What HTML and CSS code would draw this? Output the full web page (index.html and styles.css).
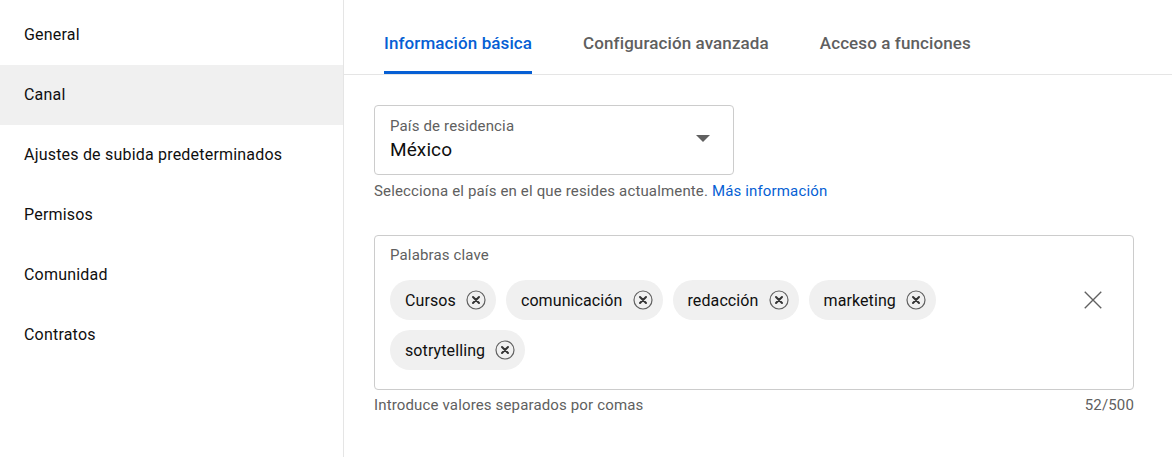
FILE: index.html
```html
<!DOCTYPE html>
<html lang="es">
<head>
<meta charset="utf-8">
<title>Canal</title>
<link rel="stylesheet" href="styles.css">
</head>
<body>
<div class="page">
  <nav class="sidebar">
    <div class="nav-item">General</div>
    <div class="nav-item active">Canal</div>
    <div class="nav-item">Ajustes de subida predeterminados</div>
    <div class="nav-item">Permisos</div>
    <div class="nav-item">Comunidad</div>
    <div class="nav-item">Contratos</div>
  </nav>
  <main class="main">
    <div class="tabs">
      <div class="tab active">Información básica</div>
      <div class="tab">Configuración avanzada</div>
      <div class="tab">Acceso a funciones</div>
    </div>
    <div class="content">
      <div class="select">
        <div class="select-text">
          <div class="field-label">País de residencia</div>
          <div class="select-value">México</div>
        </div>
        <svg class="arrow" width="24" height="24" viewBox="0 0 24 24"><path d="M5 9h14l-7 7z" fill="#606060"/></svg>
      </div>
      <p class="helper">Selecciona el país en el que resides actualmente. <a class="link">Más información</a></p>

      <div class="keywords">
        <div class="field-label">Palabras clave</div>
        <div class="kw-body">
          <div class="chips">
            <span class="chip">Cursos <svg class="chip-x" width="20" height="20" viewBox="0 0 20 20"><circle cx="10" cy="10" r="9" fill="none" stroke="#606060" stroke-width="1.2"/><path d="M7 7l6 6M13 7l-6 6" stroke="#333" stroke-width="2" stroke-linecap="round"/></svg></span>
            <span class="chip">comunicación <svg class="chip-x" width="20" height="20" viewBox="0 0 20 20"><circle cx="10" cy="10" r="9" fill="none" stroke="#606060" stroke-width="1.2"/><path d="M7 7l6 6M13 7l-6 6" stroke="#333" stroke-width="2" stroke-linecap="round"/></svg></span>
            <span class="chip">redacción <svg class="chip-x" width="20" height="20" viewBox="0 0 20 20"><circle cx="10" cy="10" r="9" fill="none" stroke="#606060" stroke-width="1.2"/><path d="M7 7l6 6M13 7l-6 6" stroke="#333" stroke-width="2" stroke-linecap="round"/></svg></span>
            <span class="chip">marketing <svg class="chip-x" width="20" height="20" viewBox="0 0 20 20"><circle cx="10" cy="10" r="9" fill="none" stroke="#606060" stroke-width="1.2"/><path d="M7 7l6 6M13 7l-6 6" stroke="#333" stroke-width="2" stroke-linecap="round"/></svg></span>
            <span class="chip">sotrytelling <svg class="chip-x" width="20" height="20" viewBox="0 0 20 20"><circle cx="10" cy="10" r="9" fill="none" stroke="#606060" stroke-width="1.2"/><path d="M7 7l6 6M13 7l-6 6" stroke="#333" stroke-width="2" stroke-linecap="round"/></svg></span>
          </div>
          <div class="clear">
            <svg width="24" height="24" viewBox="0 0 24 24"><path d="M3 3l18 18M21 3L3 21" stroke="#606060" stroke-width="1.5"/></svg>
          </div>
        </div>
      </div>
      <div class="kw-footer">
        <span>Introduce valores separados por comas</span>
        <span>52/500</span>
      </div>
    </div>
  </main>
</div>
</body>
</html>
```

FILE: styles.css
```css
* { box-sizing: border-box; }
html, body {
  margin: 0;
  padding: 0;
  background: #fff;
  font-family: Roboto, "Noto Sans", Arial, sans-serif;
  color: #0f0f0f;
}
.page {
  display: flex;
  width: 1172px;
  height: 457px;
  overflow: hidden;
}
.sidebar {
  width: 344px;
  flex: 0 0 344px;
  border-right: 1px solid #e5e5e5;
  padding-top: 5px;
}
.nav-item {
  height: 60px;
  display: flex;
  align-items: center;
  padding: 0 0 2px 24px;
  font-size: 16px;
  letter-spacing: 0.2px;
  color: #0f0f0f;
}
.nav-item.active {
  background: #f0f0f0;
}
.main {
  flex: 1;
  display: flex;
  flex-direction: column;
}
.tabs {
  display: flex;
  gap: 51px;
  padding-left: 40px;
  height: 75px;
  border-bottom: 1px solid #e5e5e5;
}
.tab {
  padding-top: 33px;
  line-height: 20px;
  font-size: 17px;
  letter-spacing: 0.1px;
  font-weight: 500;
  color: #5f5f5f;
  height: 74px;
  border-bottom: 3px solid transparent;
}
.tab.active {
  color: #065fd4;
  border-bottom-color: #065fd4;
}
.content {
  padding: 30px 0 0 30px;
}
.select {
  width: 360px;
  height: 70px;
  border: 1px solid #cccccc;
  border-radius: 4px;
  display: flex;
  align-items: center;
  justify-content: space-between;
  padding: 0 18px 0 15px;
}
.select-text {
  display: flex;
  flex-direction: column;
  gap: 3px;
}
.field-label {
  font-size: 15px;
  letter-spacing: 0.15px;
  line-height: 17px;
  color: #606060;
}
.select-value {
  font-size: 19px;
  letter-spacing: 0.1px;
  line-height: 24px;
  color: #0f0f0f;
}
.arrow {
  margin-top: -4px;
}
.helper {
  margin: 6px 0 0 0;
  font-size: 15px;
  letter-spacing: 0.15px;
  line-height: 20px;
  color: #606060;
}
.link {
  color: #065fd4;
}
.keywords {
  margin-top: 34px;
  width: 760px;
  height: 155px;
  border: 1px solid #cccccc;
  border-radius: 4px;
  padding: 11px 20px 0 15px;
}
.kw-body {
  display: flex;
  margin-top: 16px;
}
.chips {
  flex: 1;
  display: flex;
  flex-wrap: wrap;
  gap: 10px 10px;
}
.chip {
  height: 40px;
  border-radius: 20px;
  background: #f0f0f0;
  display: inline-flex;
  align-items: center;
  gap: 10px;
  padding: 0 10px 0 15px;
  font-size: 16px;
  letter-spacing: 0.1px;
  color: #0f0f0f;
}
.chip-x {
  display: block;
}
.clear {
  width: 40px;
  height: 40px;
  margin-left: 10px;
  display: flex;
  align-items: center;
  justify-content: center;
}
.clear svg {
  width: 22px;
  height: 22px;
}
.kw-footer {
  width: 760px;
  display: flex;
  justify-content: space-between;
  margin-top: 6px;
  font-size: 15px;
  letter-spacing: 0.15px;
  line-height: 18px;
  color: #606060;
}
```
